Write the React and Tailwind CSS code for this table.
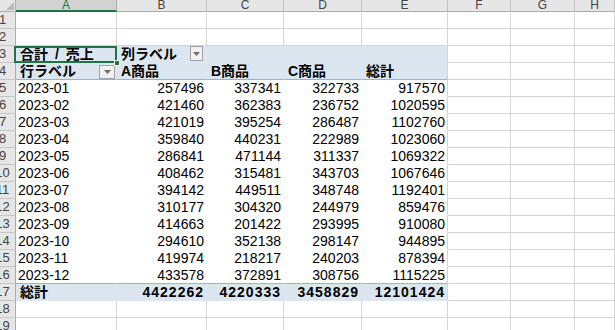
import React from 'react';

const COLS = ['A', 'B', 'C', 'D', 'E', 'F', 'G', 'H'];

const data = [
  ['2023-01', '257496', '337341', '322733', '917570'],
  ['2023-02', '421460', '362383', '236752', '1020595'],
  ['2023-03', '421019', '395254', '286487', '1102760'],
  ['2023-04', '359840', '440231', '222989', '1023060'],
  ['2023-05', '286841', '471144', '311337', '1069322'],
  ['2023-06', '408462', '315481', '343703', '1067646'],
  ['2023-07', '394142', '449511', '348748', '1192401'],
  ['2023-08', '310177', '304320', '244979', '859476'],
  ['2023-09', '414663', '201422', '293995', '910080'],
  ['2023-10', '294610', '352138', '298147', '944895'],
  ['2023-11', '419974', '218217', '240203', '878394'],
  ['2023-12', '433578', '372891', '308756', '1115225'],
];

const totals = ['総計', '4422262', '4220333', '3458829', '12101424'];

function DropButton({ className }) {
  return (
    <div
      className={`flex shrink-0 items-center justify-center border border-[#a3a3a3] bg-[#f1f1f1] ${className}`}
    >
      <svg width="7" height="4" viewBox="0 0 7 4">
        <path d="M0 0h7L3.5 4z" fill="#6b6b6b" />
      </svg>
    </div>
  );
}

function cellContent(r, c) {
  if (r === 3 && c === 1)
    return (
      <div className="relative h-full">
        <span className="pl-[4px] font-bold [word-spacing:3px]">合計 / 売上</span>
        <div className="absolute -left-[2px] top-0 -right-[1px] -bottom-[1px] border-2 border-[#217346]" />
        <div className="absolute -right-[4px] -bottom-[4px] h-[6px] w-[6px] border border-white bg-[#217346]" />
      </div>
    );
  if (r === 3 && c === 2)
    return (
      <div className="flex h-full items-start justify-between">
        <span className="pl-[4px] font-bold">列ラベル</span>
        <DropButton className="mr-[3px] h-[15px] w-[13px]" />
      </div>
    );
  if (r === 4 && c === 1)
    return (
      <div className="flex h-full items-start justify-between">
        <span className="pl-[4px] font-bold">行ラベル</span>
        <DropButton className="mr-[1px] mt-[2px] h-[14px] w-[16px]" />
      </div>
    );
  if (r === 4 && c >= 2 && c <= 5) {
    const labels = ['A商品', 'B商品', 'C商品', '総計'];
    return <span className="pl-[4px] font-bold">{labels[c - 2]}</span>;
  }
  if (r >= 5 && r <= 16 && c >= 1 && c <= 5) {
    const v = data[r - 5][c - 1];
    if (c === 1) return <span className="pl-[2px]">{v}</span>;
    return <div className="pr-[2px] text-right">{v}</div>;
  }
  if (r === 17 && c >= 1 && c <= 5) {
    const v = totals[c - 1];
    if (c === 1) return <span className="pl-[4px] font-bold">{v}</span>;
    return <div className="pr-[2px] text-right font-bold tracking-[1px]">{v}</div>;
  }
  return null;
}

function cellClass(r, c) {
  const pivot = r >= 3 && r <= 17 && c >= 1 && c <= 5;
  if (!pivot) return 'border-r border-b border-[#d4d4d4] bg-white';
  const bg = r === 3 || r === 4 || r === 17 ? 'bg-[#dce6f1]' : 'bg-white';
  const right = c === 5 ? 'border-r border-r-[#d4d4d4]' : 'border-r border-r-transparent';
  const bottom = r === 4 || r === 16 ? 'border-b border-b-[#95b3d7]' : 'border-b border-b-transparent';
  return `${bg} ${right} ${bottom}`;
}

export default function App() {
  const rows = Array.from({ length: 19 }, (_, i) => i + 1);

  return (
    <div
      className="h-[330px] w-[615px] overflow-hidden bg-white text-[14px] text-black"
      style={{ fontFamily: '"Liberation Sans", "Noto Sans CJK JP", sans-serif' }}
    >
      <div className="grid grid-cols-[16px_101px_90px_77px_78px_86px_63px_64px_1fr]">
        {/* column headers */}
        <div className="relative h-[12px] border-r border-b border-[#ababab] bg-[#e6e6e6]">
          <svg className="absolute bottom-[1px] right-[1px]" width="8" height="8" viewBox="0 0 8 8">
            <path d="M8 0v8H0z" fill="#b9b9b9" />
          </svg>
        </div>
        {COLS.map((col, i) => (
          <div
            key={col}
            className={
              i === 0
                ? 'flex h-[12px] items-center justify-center border-r border-r-[#ababab] border-b-2 border-b-[#217346] bg-[#d2d2d2] text-[12px] leading-[10px] text-[#217346]'
                : 'flex h-[12px] items-center justify-center border-r border-r-[#c4c4c4] border-b border-b-[#ababab] bg-[#e6e6e6] text-[12px] leading-[11px] text-[#444]'
            }
          >
            {col}
          </div>
        ))}

        {rows.map((r) => (
          <React.Fragment key={r}>
            <div className="h-[17px] overflow-hidden border-r border-r-[#ababab] border-b border-b-[#c6c6c6] bg-[#e6e6e6] text-[13px] leading-[16px] text-[#444]">
              <div className="flex h-full w-[5px] justify-center whitespace-nowrap">{r}</div>
            </div>
            {COLS.map((col, ci) => (
              <div
                key={col}
                className={`h-[17px] whitespace-nowrap leading-[16px] ${cellClass(r, ci + 1)}`}
              >
                {cellContent(r, ci + 1)}
              </div>
            ))}
          </React.Fragment>
        ))}
      </div>
    </div>
  );
}
